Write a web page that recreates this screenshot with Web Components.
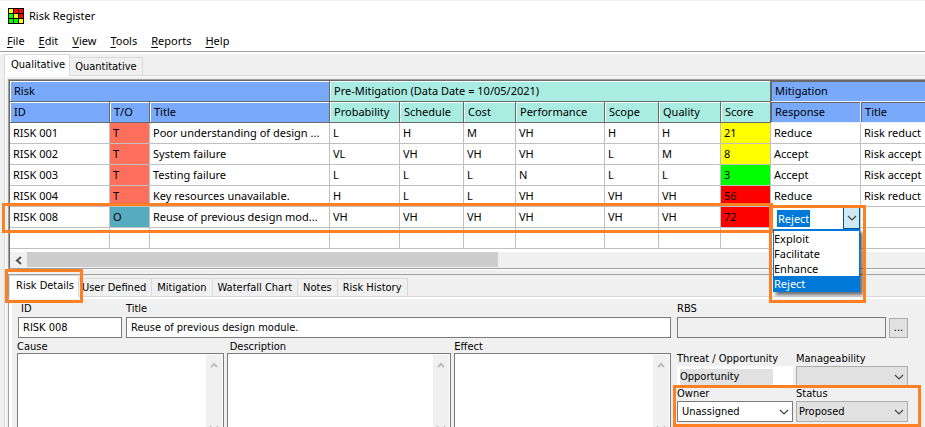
<!DOCTYPE html>
<html lang="en">
<head>
<meta charset="utf-8">
<title>Risk Register</title>
<style>
  html, body { margin: 0; height: 100%; overflow: hidden; background: #f0f0f0; }
</style>
</head>
<body>
<risk-app></risk-app>
<script>
class Base extends HTMLElement {
  connectedCallback() {
    if (this.shadowRoot) return;
    this.attachShadow({ mode: 'open' }).innerHTML =
      '<style>*{box-sizing:border-box}:host{box-sizing:border-box}</style>' + this.render();
  }
}
const chevron = (dir, color, cls = '') =>
  `<svg class="${cls}" width="10" height="6" viewBox="0 0 10 6" fill="none" stroke="${color}" stroke-width="${dir === 'up' ? 2 : 1.2}" aria-hidden="true"><path d="${dir === 'up' ? 'M2 5 5 2 8 5' : 'M1 1 5 5 9 1'}"/></svg>`;

/* Orange annotation frame laid over its positioned parent. */
customElements.define('focus-ring', class extends Base {
  render() {
    return `<style>:host{position:absolute;border:3px solid #ff8022;pointer-events:none;z-index:5}</style>`;
  }
});

customElements.define('title-bar', class extends Base {
  render() {
    const c = ['#ff0', 'red', 'red', 'lime', '#ff0', 'red', 'lime', 'lime', '#ff0'];
    const cells = c.map((f, i) => `<rect x="${1 + (i % 3) * 5}" y="${1 + Math.floor(i / 3) * 5}" width="4" height="4" fill="${f}"/>`).join('');
    return `<style>
      :host{display:flex;align-items:center;gap:5px;height:31px;padding:0 8px;background:#fff;border-top:1px solid #f0f0f0}
      h1{margin:0;font:var(--ui-font)}
    </style>
    <svg width="16" height="16" viewBox="0 0 16 16" shape-rendering="crispEdges" aria-hidden="true"><rect width="16" height="16"/>${cells}</svg>
    <h1>Risk Register</h1>`;
  }
});

customElements.define('menu-bar', class extends Base {
  render() {
    const items = ['File', 'Edit', 'View', 'Tools', 'Reports', 'Help'];
    return `<style>
      :host{display:flex;gap:14px;height:21px;padding:0 7px;background:#fff;border-bottom:1px solid #a0a0a0}
      button{font:var(--ui-font);border:0;padding:0;background:none;color:#000}
      u{text-underline-offset:2px}
    </style>` + items.map(t => `<button><u>${t[0]}</u>${t.slice(1)}</button>`).join('');
  }
});

/* Tab strip: the first tab is the selected one. */
customElements.define('tab-strip', class extends Base {
  render() {
    const tabs = this.getAttribute('tabs').split('|');
    return `<style>
      :host{display:flex;align-items:flex-end;height:22px;box-shadow:inset 0 -1px #d9d9d9}
      button{position:relative;height:19px;padding:0 5px;border:1px solid #d9d9d9;border-left-width:0;background:#f0f0f0;color:#000;font:var(--form-font);white-space:nowrap}
      button[aria-selected=true]{height:22px;padding:0 4px 2px 6px;background:#fff;border-bottom:0;border-left-width:1px}
      focus-ring{inset:-7px -5px -6px -5px}
      :host([ringed]) button:nth-of-type(2){padding-left:3px}
    </style>` + tabs.map((t, i) => `<button role="tab" aria-selected="${i === 0}">${t}${i === 0 && this.hasAttribute('ringed') ? '<focus-ring></focus-ring>' : ''}</button>`).join('');
  }
});

customElements.define('cell-editor', class extends Base {
  render() {
    return `<style>
      :host{display:block;position:absolute;z-index:6;width:87px;font:11px/15px "Noto Sans",sans-serif}
      .box{display:flex;height:22px;background:#fff;align-items:center;padding-left:4px;justify-content:space-between}
      input{field-sizing:content;font:inherit;line-height:17px;height:17px;padding:0 1px;border:0;background:#0078d7;color:#fff}
      button{width:17px;height:22px;padding:0;border:1px solid #005499;background:#cfe9f5;display:grid;place-items:center}
      select{display:block;width:87px;height:63px;padding:0;border:1px solid #0078d7;border-top-width:2px;border-radius:0;outline:0;background:#fff;font:inherit;overflow:hidden;box-shadow:3px 3px 3px #0008;color:#000}
      option{padding:0;min-height:15px;line-height:15px;height:15px}
      option:checked{background:#0078d7 linear-gradient(#0078d7,#0078d7);color:#fff}
      focus-ring{inset:-2px -6px -11px -4px}
    </style>
    <div class="box"><input aria-label="Response" value="Reject"><button aria-label="Show responses">${chevron('down', '#444')}</button></div>
    <select size="4" aria-label="Responses"><option>Exploit</option><option>Facilitate</option><option>Enhance</option><option selected>Reject</option></select>
    <focus-ring></focus-ring>`;
  }
});

customElements.define('risk-grid', class extends Base {
  render() {
    const widths = [100, 40, 180, 70, 64, 52, 89, 54, 62, 50, 90, 180];
    const heads = ['ID', 'T/O', 'Title', 'Probability', 'Schedule', 'Cost', 'Performance', 'Scope', 'Quality', 'Score', 'Response', 'Title'];
    const rows = [
      ['RISK 001', 'T', 'Poor understanding of design ...', 'L', 'H', 'M', 'VH', 'H', 'H', '21', 'Reduce', 'Risk reduct'],
      ['RISK 002', 'T', 'System failure', 'VL', 'VH', 'VH', 'VH', 'L', 'M', '8', 'Accept', 'Risk accept'],
      ['RISK 003', 'T', 'Testing failure', 'L', 'L', 'L', 'N', 'L', 'L', '3', 'Accept', 'Risk accept'],
      ['RISK 004', 'T', 'Key resources unavailable.', 'H', 'L', 'L', 'VH', 'VH', 'VH', '56', 'Reduce', 'Risk reduct'],
      ['RISK 008', 'O', 'Reuse of previous design mod...', 'VH', 'VH', 'VH', 'VH', 'VH', 'VH', '72', '', ''],
      Array(12).fill('')
    ];
    const score = v => v === '' ? '' : v > 50 ? 'high' : v < 5 ? 'low' : 'mid';
    const cls = (v, i) => i === 1 ? v : i === 9 ? score(v) : '';
    return `<style>
      :host{display:block;position:relative;background:#fff;border:solid #696969;border-width:1px 0 0 1px;outline:1px solid #a0a0a0}
      .clip{overflow:hidden}
      table{table-layout:fixed;border-collapse:separate;border-spacing:0;width:1031px;font:var(--ui-font)}
      th,td{height:21px;padding:0 0 0 3px;text-align:left;font-weight:400;white-space:nowrap;overflow:hidden;border:solid #c0c0c0;border-width:0 1px 1px 0}
      th{padding-left:4px;background:#78a9fb;border-color:#696969;box-shadow:inset 1px 1px #fff}
      th.pre{background:#a9ece2}
      th.mit{border-color:#e8eefb;box-shadow:inset 1px 1px #696969}
      .T{background:#ff705c}.O{background:#56abbf}
      .mid{background:#ff0}.low{background:#0f0}.high{background:red}
      .scroll{display:flex;height:16px;margin-top:3px;background:#f0f0f0}
      .scroll button{width:17px;padding:0;border:0;background:none;display:grid;place-items:center}
      .thumb{width:471px;height:15px;background:#cdcdcd}
      .row{left:-8px;top:122px;width:771px;height:30px}
      cell-editor{left:763px;top:126px}
    </style>
    <div class="clip"><table>
      <colgroup>${widths.map(w => `<col style="width:${w}px">`).join('')}</colgroup>
      <thead><tr><th colspan="3">Risk</th><th class="pre" colspan="7">Pre-Mitigation (Data Date = 10/05/2021)</th><th class="mit" colspan="2">Mitigation</th></tr>
      <tr>${heads.map((h, i) => `<th class="${i > 9 ? 'mit' : i > 2 ? 'pre' : ''}">${h}</th>`).join('')}</tr></thead>
      <tbody>${rows.map(r => `<tr>${r.map((v, i) => `<td class="${cls(v, i)}">${v}</td>`).join('')}</tr>`).join('')}</tbody>
    </table></div>
    <div class="scroll"><button aria-label="Scroll left"><svg width="7" height="9" viewBox="0 0 7 9" fill="none" stroke="#505050" stroke-width="2"><path d="M6 1 2 4.500 6 8"/></svg></button><div class="thumb"></div></div>
    <focus-ring class="row"></focus-ring>
    <cell-editor></cell-editor>`;
  }
});

/* Labelled control; kind is text, area or select. */
customElements.define('form-field', class extends Base {
  render() {
    const kind = this.getAttribute('kind'), label = this.getAttribute('label'), value = this.getAttribute('value') || '';
    const body = kind === 'area'
      ? `<div class="area"><textarea id="f"></textarea><div class="bar">${chevron('up', '#bdbdbd')}${chevron('down', '#bdbdbd')}</div></div>`
      : kind === 'select'
      ? `<div class="sel"><select id="f"><option>${value}</option></select>${chevron('down', '#444', 'chev')}</div>`
      : `<input id="f" value="${value}">`;
    return `<style>
      :host{display:block;min-width:0;font:var(--form-font)}
      label{display:block;line-height:14px;white-space:nowrap}
      :host([kind=text]) label{line-height:16px}
      :host([inset]) label{padding-left:3px}
      :host([kind=area]) label{line-height:12px}
      input,select,textarea{display:block;width:100%;margin:0;border:1px solid #7a7a7a;border-radius:0;background:#fff;color:#000;font:inherit;outline:0}
      input{height:21px;padding:0 4px}
      :host([grey]) input{background:#f0f0f0}
      .sel{position:relative}
      select{appearance:none;height:21px;padding:0 4px;opacity:1}
      :host([grey]) select{background:#e1e1e1;border-color:#adadad;padding-left:2px}
      :host([flat]) select{border:solid #fff;border-width:3px 20px 2px 3px;background:#e1e1e1;padding:0}
      :host([flat]) .chev{display:none}
      .chev{position:absolute;right:4px;top:8px}
      .area{display:flex;height:80px;border:1px solid #7a7a7a;background:#fff;padding:1px}
      textarea{flex:1;width:0;border:0;resize:none}
      .bar{width:16px;background:#f0f0f0;display:flex;flex-direction:column;justify-content:space-between;align-items:center;padding:7px 0 0}
    </style><label for="f">${label}</label>${body}`;
  }
});

customElements.define('risk-details', class extends Base {
  render() {
    return `<style>
      :host{display:flex;gap:6px;padding:2px 17px 0 5px;border-top:2px solid #fff;border-left:3px solid #fff;background:#f0f0f0}
      .main{flex:1;min-width:0}
      .ids{display:grid;grid-template-columns:104px 1fr;gap:4px;padding-left:1px}
      .areas{display:grid;grid-template-columns:207fr 225fr 217fr;gap:3px;margin-top:3px}
      .side{width:231px}
      .rbs{display:flex;align-items:flex-end;gap:3px}
      .rbs form-field{flex:1}
      .rbs button{width:19px;height:20px;padding:0;border:1px solid #adadad;background:#e1e1e1;font:var(--form-font)}
      .pair{position:relative;display:grid;grid-template-columns:116px 1fr;gap:3px}
      .pair.first{margin-top:14px}
      focus-ring{inset:-2px -13px -5px -4px}
    </style>
    <div class="main">
      <div class="ids"><form-field inset kind="text" label="ID" value="RISK 008"></form-field><form-field kind="text" label="Title" value="Reuse of previous design module."></form-field></div>
      <div class="areas"><form-field kind="area" label="Cause"></form-field><form-field inset kind="area" label="Description"></form-field><form-field kind="area" label="Effect"></form-field></div>
    </div>
    <div class="side">
      <div class="rbs"><form-field grey kind="text" label="RBS"></form-field><button aria-label="Browse RBS">...</button></div>
      <div class="pair first"><form-field flat kind="select" label="Threat / Opportunity" value="Opportunity"></form-field><form-field grey kind="select" label="Manageability"></form-field></div>
      <div class="pair"><form-field kind="select" label="Owner" value="Unassigned"></form-field><form-field grey kind="select" label="Status" value="Proposed"></form-field><focus-ring></focus-ring></div>
    </div>`;
  }
});

customElements.define('risk-app', class extends Base {
  render() {
    return `<style>
      :host{display:block;color:#000;background:#f0f0f0;--ui-font:11px/16px "Noto Sans",sans-serif;--form-font:11px/14px "DejaVu Sans Condensed",sans-serif}
      .work{border-top:2px solid #fff;padding:0 0 0 4px}
      .panel{border-left:1px solid #d9d9d9;box-shadow:inset 1px 1px #fff;padding:4px 0 0 4px}
      .gap{height:6px;border-top:1px solid #e3e3e3;box-shadow:inset 0 1px #fff}
      .lower{margin-left:-1px;border:solid #a0a0a0;border-width:1px 0 0 1px}
    </style>
    <title-bar></title-bar>
    <menu-bar></menu-bar>
    <div class="work">
      <tab-strip tabs="Qualitative|Quantitative"></tab-strip>
      <div class="panel">
        <risk-grid></risk-grid>
        <div class="gap"></div>
        <div class="lower">
          <tab-strip ringed tabs="Risk Details|User Defined|Mitigation|Waterfall Chart|Notes|Risk History"></tab-strip>
          <risk-details></risk-details>
        </div>
      </div>
    </div>`;
  }
});
</script>
</body>
</html>
